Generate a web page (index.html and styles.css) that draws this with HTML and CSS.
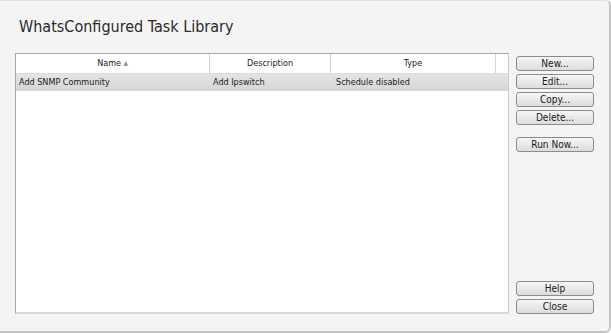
FILE: index.html
```html
<!DOCTYPE html>
<html>
<head>
<meta charset="utf-8">
<link rel="stylesheet" href="styles.css">
</head>
<body>
<div class="window">
  <h1 class="title">WhatsConfigured Task Library</h1>
  <div class="content">
    <div class="grid">
      <div class="grid-head">
        <div class="hcell c-name">Name <span class="sort">&#9650;</span></div>
        <div class="hcell c-desc">Description</div>
        <div class="hcell c-type">Type</div>
        <div class="hcell c-scroll"></div>
      </div>
      <div class="grid-row selected">
        <div class="cell c-name">Add SNMP Community</div>
        <div class="cell c-desc">Add Ipswitch</div>
        <div class="cell c-type">Schedule disabled</div>
      </div>
    </div>
    <div class="buttons">
      <div class="group">
        <button class="btn">New...</button>
        <button class="btn">Edit...</button>
        <button class="btn">Copy...</button>
        <button class="btn">Delete...</button>
        <button class="btn run">Run Now...</button>
      </div>
      <div class="group">
        <button class="btn">Help</button>
        <button class="btn">Close</button>
      </div>
    </div>
  </div>
</div>
</body>
</html>
```
FILE: styles.css
```css
html, body {
  margin: 0;
  padding: 0;
  background: #ffffff;
}
body {
  font-family: "DejaVu Sans Condensed", "DejaVu Sans", sans-serif;
  font-size: 9px;
  color: #1a1a1a;
}
.window {
  box-sizing: border-box;
  width: 611px;
  height: 333px;
  background: #f4f4f4;
  border-right: 2px solid #c4c4c4;
  border-bottom: 2px solid #c4c4c4;
  border-top: 1px solid #e2e2e2;
  border-radius: 0 5px 6px 0;
  padding: 0 0 0 15px;
  display: flex;
  flex-direction: column;
}
.title {
  margin: 0;
  padding: 17px 0 0 4px;
  height: 35px;
  box-sizing: border-box;
  font-weight: normal;
  font-size: 16px;
  line-height: 18px;
  color: #2a2a2a;
}
.content {
  display: flex;
  margin-top: 17px;
  gap: 7px;
}
.grid {
  box-sizing: border-box;
  width: 494px;
  height: 261px;
  background: #fff;
  border-top: 1px solid #a8a8a8;
  border-left: 1px solid #a8a8a8;
  border-right: 1px solid #cfcfcf;
  border-bottom: 2px solid #d8d8d8;
}
.grid-head {
  display: flex;
  height: 19px;
  border-bottom: 1px solid #dcdcdc;
}
.hcell {
  box-sizing: border-box;
  text-align: center;
  line-height: 18px;
  border-right: 1px solid #d4d4d4;
  color: #222;
}
.sort {
  font-size: 6px;
  color: #888;
  vertical-align: 1px;
}
.c-name { width: 194px; }
.c-desc { width: 121px; }
.c-type { width: 165px; }
.c-scroll { width: 12px; border-right: none; }
.grid-row {
  display: flex;
  height: 17px;
}
.grid-row.selected {
  background: linear-gradient(#e4e4e4, #d6d6d6);
}
.cell {
  box-sizing: border-box;
  line-height: 17px;
  padding-left: 3px;
  white-space: nowrap;
}
.grid-row .c-type { padding-left: 5px; }
.buttons {
  width: 78px;
  display: flex;
  flex-direction: column;
  justify-content: space-between;
  padding-top: 3px;
}
.group {
  display: flex;
  flex-direction: column;
  gap: 3px;
}
.btn {
  box-sizing: border-box;
  width: 78px;
  height: 15px;
  padding: 0;
  margin: 0;
  font-family: "DejaVu Sans Condensed", "DejaVu Sans", sans-serif;
  font-size: 10px;
  line-height: 13px;
  color: #1a1a1a;
  border: 1px solid #8c8c8c;
  border-radius: 3px;
  background: linear-gradient(#f6f6f6, #dcdcdc);
}
.btn.run {
  margin-top: 9px;
}
```
